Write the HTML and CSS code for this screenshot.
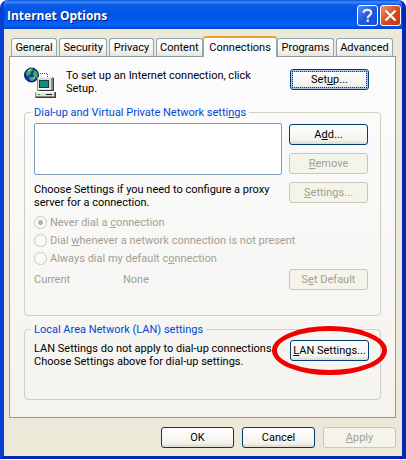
FILE: index.html
```html
<!DOCTYPE html>
<html lang="en">
<head>
    <meta charset="UTF-8">
    <meta name="viewport" content="width=device-width, initial-scale=1.0">
    <title>Internet Options</title>
    <link rel="stylesheet" href="styles.css">
</head>
<body>
    <div class="window">
        <div class="titlebar">
            <h1>Internet Options</h1>
            <button class="caption-btn help" aria-label="Help">
                <svg width="19" height="19" viewBox="0 0 19 19">
                    <path d="M5.5 6.8C5.6 4.6 7.2 3.8 9.3 3.8c2.3 0 3.9 1.1 3.9 3 0 2.4-3.5 2.7-3.5 5.4M9.7 13.6v2.4" fill="none" stroke="#e6edfb" stroke-width="2.2"/>
                </svg>
            </button>
            <button class="caption-btn close" aria-label="Close">
                <svg width="19" height="19" viewBox="0 0 19 19">
                    <path d="M4.5 4.5l10 10M14.5 4.5l-10 10" stroke="#fff" stroke-width="2.2"/>
                </svg>
            </button>
        </div>

        <div class="client">
            <div class="tabs" role="tablist">
                <button class="tab" role="tab">General</button>
                <button class="tab" role="tab">Security</button>
                <button class="tab" role="tab">Privacy</button>
                <button class="tab" role="tab">Content</button>
                <button class="tab active" role="tab" aria-selected="true">Connections</button>
                <button class="tab" role="tab">Programs</button>
                <button class="tab" role="tab">Advanced</button>
            </div>

            <div class="panel" role="tabpanel">
                <div class="intro">
                    <svg class="net-icon" width="33" height="33" viewBox="0 0 33 33" shape-rendering="crispEdges">
                        <path d="M16 7.5h8M23.5 8v3" fill="none" stroke="#d01828" stroke-dasharray="1 1"/>
                        <g shape-rendering="auto">
                            <circle cx="7.5" cy="9" r="7" fill="#1438b0" stroke="#101850"/>
                            <path d="M4 4l4-2 1 2-2 2-1 3-3 1-1-2 1-3zM10 4l3 2 1 3-2 3-2-1-1-3zM5 11l4 0 2 2-3 2-2-1z" fill="#3fb04c"/>
                            <path d="M4 5l3-2M9 12h2" stroke="#c0f4e0"/>
                        </g>
                        <path d="M13 11h16v14H13z" fill="#8c8c84"/>
                        <path d="M14 12h13v12H14z" fill="#dcdcd2"/>
                        <path d="M14 11h14v1H14z" fill="#f4f4ee"/>
                        <path d="M29 12h1v13H15v-1h14z" fill="#3a3a36"/>
                        <path d="M15 14h10v8H15z" fill="#123c40"/>
                        <path d="M16 15h8v6h-8z" fill="#178a86"/>
                        <path d="M14 22h12v1H14z" fill="#fff"/>
                        <path d="M11 26h20v6H11z" fill="#8c8c84"/>
                        <path d="M12 26h18v4H12z" fill="#dcdcd2"/>
                        <path d="M12 26h18v1H12z" fill="#f8f8f2"/>
                        <path d="M31 26h1v6H12v-1h19z" fill="#3a3a36"/>
                        <path d="M22 28.5h6" stroke="#222"/>
                        <path d="M14 28.5h2" stroke="#35b43c"/>
                    </svg>
                    <p>To set up an Internet connection, click Setup.</p>
                    <button class="btn default">Set<u>u</u>p...</button>
                </div>

                <fieldset class="group dialup">
                    <legend>Dial-up and Virtual Private Network setti<u>n</u>gs</legend>
                    <div class="columns">
                        <div class="left">
                            <select class="list" size="4" aria-label="Dial-up and Virtual Private Network settings"></select>
                            <p>Choose Settings if you need to configure a proxy server for a connection.</p>
                        </div>
                        <div class="buttons">
                            <button class="btn">A<u>d</u>d...</button>
                            <button class="btn" disabled><u>R</u>emove</button>
                            <button class="btn" disabled><u>S</u>ettings...</button>
                        </div>
                    </div>
                    <div class="radios">
                        <label><input type="radio" name="dial" checked disabled><span>Never dial a <u>c</u>onnection</span></label>
                        <label><input type="radio" name="dial" disabled><span>Dial <u>w</u>henever a network connection is not present</span></label>
                        <label><input type="radio" name="dial" disabled><span>Always dial my default c<u>o</u>nnection</span></label>
                    </div>
                    <div class="current">
                        <span class="current-label">Current</span>
                        <span class="current-value">None</span>
                        <button class="btn" disabled>S<u>e</u>t Default</button>
                    </div>
                </fieldset>

                <fieldset class="group lan">
                    <legend>Local Area Network (LAN) settings</legend>
                    <div class="lan-row">
                        <p>LAN Settings do not apply to dial-up connections. Choose Settings above for dial-up settings.</p>
                        <div class="marked">
                            <button class="btn"><u>L</u>AN Settings...</button>
                            <span class="ring"></span>
                        </div>
                    </div>
                </fieldset>
            </div>

            <div class="footer">
                <button class="btn">OK</button>
                <button class="btn">Cancel</button>
                <button class="btn" disabled><u>A</u>pply</button>
            </div>
        </div>
    </div>
</body>
</html>
```
FILE: styles.css
```css
* {
    margin: 0;
    padding: 0;
    box-sizing: border-box;
}

body {
    font-family: Tahoma, Roboto, sans-serif;
    font-size: 11px;
    line-height: 13px;
    color: #000;
    background-color: #fff;
}

button {
    font: inherit;
    color: inherit;
}

.window {
    border: 4px solid #0a3fd6;
    border-top: none;
    border-right-color: #0428b4;
    border-bottom: 3px solid #0428b4;
    border-radius: 8px 8px 0 0;
    background-color: #ece9d8;
    overflow: hidden;
}

.titlebar {
    display: flex;
    align-items: center;
    gap: 2px;
    height: 29px;
    margin: 0 -4px;
    padding: 2px 5px 0 7px;
    background: linear-gradient(#0a4fd0 0, #3a8cff 2px, #0a5be8 5px, #0054e3 15px, #0562fa 25px, #0040c8 29px);
}

.titlebar h1 {
    flex: 1;
    font-family: "Trebuchet MS", "Open Sans", sans-serif;
    font-size: 12px;
    font-weight: bold;
    color: #fff;
    text-shadow: 1px 1px #0a1883;
}

.caption-btn {
    width: 21px;
    height: 21px;
    border: 1px solid #fff;
    border-radius: 3px;
}

.caption-btn svg {
    display: block;
}

.help {
    background: linear-gradient(135deg, #5c8df5, #2458dc 50%, #1c50d0);
}

.close {
    background: linear-gradient(135deg, #f09070, #dc4a20 50%, #c03810);
}

.client {
    padding: 7px 6px 8px 5px;
}

.tabs {
    display: flex;
    align-items: flex-end;
    gap: 2px;
    height: 20px;
    padding: 0 3px 0 2px;
}

.tab {
    flex: 1 1 auto;
    height: 18px;
    border: 1px solid #91a7b4;
    border-bottom: none;
    border-radius: 3px 3px 0 0;
    background: linear-gradient(#fff, #f3f3ee 70%, #e6e5dc);
}

.tab.active {
    position: relative;
    height: 21px;
    margin: 0 -2px -1px;
    padding: 0 2px 1px;
    border-top: 2px solid #e9a02c;
    background: #fcfcfe;
}

.panel {
    padding: 9px 14px 17px;
    border: 1px solid #919b9c;
    background: linear-gradient(#fcfcfe, #f4f3ee);
}

.intro {
    display: flex;
    gap: 9px;
    padding-right: 12px;
}

.net-icon {
    flex: none;
}

.intro p {
    flex: 1;
    padding: 3px 20px 0 0;
}

.btn {
    width: 79px;
    height: 21px;
    border: 1px solid #003c74;
    border-radius: 3px;
    background: linear-gradient(#fff, #f3f2ec 80%, #dcd8cc);
}

.btn:disabled {
    color: #a1a192;
    border-color: #c9c7ba;
    background: #f5f4ea;
}

.intro .btn {
    margin-top: 3px;
}

.btn.default {
    box-shadow: inset 0 0 0 2px #a9c4f0;
    outline: 1px dotted #333;
    outline-offset: -3px;
}

.group {
    border: 1px solid #d0d0bf;
    border-radius: 4px;
    min-width: 0;
}

.group legend {
    margin-left: -3px;
    padding: 0 3px;
    color: #0046d5;
}

.dialup {
    margin-top: 7px;
    padding: 4px 12px 25px 9px;
}

.columns {
    display: flex;
    gap: 7px;
}

.left {
    flex: 1;
}

.list {
    display: block;
    width: 100%;
    height: 52px;
    margin-bottom: 8px;
    border: 1px solid #7f9db9;
    background-color: #fff;
    overflow: hidden;
}

.buttons {
    display: flex;
    flex-direction: column;
    gap: 8px;
    padding-top: 1px;
}

.radios {
    margin-top: 4px;
    color: #a1a192;
}

.radios label {
    display: flex;
    align-items: center;
    gap: 3px;
    height: 18px;
}

.radios input {
    appearance: none;
    width: 13px;
    height: 13px;
    border: 1px solid #cac8bb;
    border-radius: 50%;
    background-color: #fbfaf6;
}

.radios input:checked {
    background: radial-gradient(circle, #b4b3a5 0, #b4b3a5 2px, #fbfaf6 3px);
}

.current {
    display: flex;
    align-items: center;
    margin-top: 2px;
    color: #a1a192;
}

.current-label {
    width: 89px;
}

.current-value {
    flex: 1;
}

.lan {
    margin-top: 7px;
    padding: 4px 11px 31px 9px;
}

.lan-row {
    display: flex;
}

.lan-row p {
    flex: 1;
    padding-top: 2px;
}

.marked {
    position: relative;
    height: 21px;
}

.ring {
    position: absolute;
    inset: -14px -18px;
    border: 5px solid #f00000;
    border-radius: 50%;
    pointer-events: none;
}

.footer {
    display: flex;
    justify-content: flex-end;
    gap: 8px;
    margin-top: 9px;
}

.footer .btn {
    width: 73px;
}
```
